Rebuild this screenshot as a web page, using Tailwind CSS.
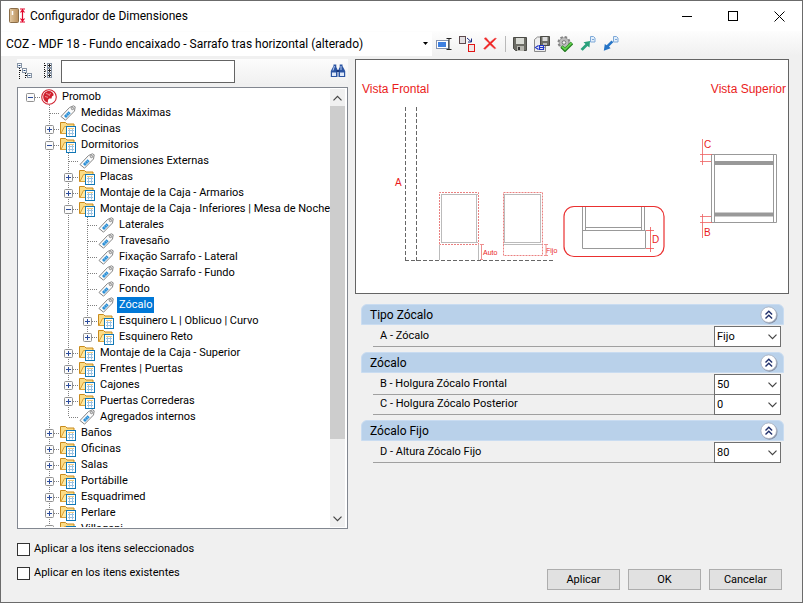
<!DOCTYPE html>
<html lang="es">
<head>
<meta charset="utf-8">
<meta name="viewport" content="width=device-width, initial-scale=1">
<title>Configurador de Dimensiones</title>
<script src="https://cdn.jsdelivr.net/npm/@tailwindcss/browser@4"></script>
</head>
<body class="h-screen overflow-hidden bg-[#f0f0f0] font-[Roboto,sans-serif] text-[11px] leading-4 text-black">
<svg class="hidden" aria-hidden="true">
  <symbol id="folder" viewBox="0 0 16 16">
    <path d="M.5 12.500V1.500h5l1.500 1.500h7v9.500z" fill="#fbdc86" stroke="#c98a1c"/>
    <path d="M1 12.500L4.500 5.500h10l-2 7z" fill="#ffe9a3" stroke="#dba23a"/>
    <rect x="6.500" y="5.500" width="9" height="10" fill="#fff" stroke="#1177b5"/>
    <path d="M8 9.500h6M8 12.500h6M9.500 8v6.500M12.500 8v6.500" stroke="#9cc3e2" fill="none"/>
    <path d="M8 7.500h6" stroke="#f0c97c"/>
  </symbol>
  <symbol id="tag" viewBox="0 0 16 16">
    <path d="M1 11.500L9.500 2.500L13.500 .8L15.200 1.800L14.500 6L5.500 15.200z" fill="#fbfbfb" stroke="#858585"/>
    <circle cx="12.500" cy="3.500" r="1.200" fill="#ddd" stroke="#777" stroke-width=".8"/>
    <path d="M4 11l4.500-4.700 2.200 2L6 13z" fill="#2b8fd6"/>
    <path d="M5.700 9l2.300 2.500M7.300 7.500L9.500 9.700" stroke="#a9d3f1" stroke-width=".7"/>
  </symbol>
  <symbol id="brand" viewBox="0 0 16 16">
    <circle cx="8" cy="8" r="7.300" fill="#fff" stroke="#d0202e" stroke-width="1.100"/>
    <path d="M8 2C4.500 2 2.200 4.700 2.200 8c0 3 2 5.300 4.800 5.800C6.600 12 7 10.600 8.200 9.600l2.400-.2.300-1.900 1.800-1.200C12.600 3.800 10.500 2 8 2z" fill="#d0202e"/>
    <path d="M5 4.500l3 1M4 7.500l3 .8M9.500 4l-1.500 3" stroke="#f7c3c6" stroke-width=".7"/>
  </symbol>
  <symbol id="plus" viewBox="0 0 9 9"><rect x=".5" y=".5" width="8" height="8" rx="1" fill="#fbfbfb" stroke="#919191"/><path d="M2 4.500h5M4.500 2v5" stroke="#2c4c9c"/></symbol>
  <symbol id="minus" viewBox="0 0 9 9"><rect x=".5" y=".5" width="8" height="8" rx="1" fill="#fbfbfb" stroke="#919191"/><path d="M2 4.500h5" stroke="#2c4c9c"/></symbol>
  <symbol id="chevron" viewBox="0 0 9 6"><path d="M.5 .7l4 4 4-4" fill="none" stroke="#444" stroke-width="1.200"/></symbol>
  <symbol id="collapse" viewBox="0 0 18 18">
    <circle cx="9.500" cy="9.700" r="8" fill="#8792a8"/><circle cx="8.700" cy="8.700" r="7.800" fill="#fff" stroke="#a4adbd" stroke-width=".8"/>
    <path d="M5.500 8.500l3.300-3.300 3.300 3.300M5.500 12.500l3.300-3.300 3.300 3.300" fill="none" stroke="#1f2f6b" stroke-width="1.400"/>
  </symbol>
</svg>

<div class="flex h-full flex-col border border-[#6b6b6b]">
  <header class="flex h-[30px] shrink-0 items-center bg-white pl-2">
    <svg class="h-4 w-[17px]" viewBox="0 0 17 16" aria-hidden="true">
      <defs><linearGradient id="wood" x1="0" x2="1"><stop offset="0" stop-color="#e3c9a2"/><stop offset="1" stop-color="#b98f5b"/></linearGradient></defs>
      <rect x=".5" y=".5" width="9" height="14" rx="1" fill="url(#wood)" stroke="#8a6d48"/><path d="M3.500 3v4" stroke="#fff" stroke-width="1.500"/>
      <path d="M11 1h5M11 14h5M13.500 2v11M11.500 4.500l2-2.500 2 2.500M11.500 10.500l2 2.500 2-2.500" fill="none" stroke="#e2062c" stroke-width="1.200"/>
    </svg>
    <h1 class="ml-1 flex-1 text-[12px]">Configurador de Dimensiones</h1>
    <button class="flex h-full w-[46px] items-center justify-center" aria-label="Minimizar"><svg class="h-[11px] w-[11px]" viewBox="0 0 11 11"><path d="M0 5.500h10" stroke="#000"/></svg></button>
    <button class="flex h-full w-[46px] items-center justify-center" aria-label="Maximizar"><svg class="h-[11px] w-[11px]" viewBox="0 0 11 11"><rect x=".5" y=".5" width="9" height="9" fill="none" stroke="#000"/></svg></button>
    <button class="flex h-full w-[46px] items-center justify-center" aria-label="Cerrar"><svg class="h-[11px] w-[11px]" viewBox="0 0 11 11"><path d="M.5 .5l10 10M10.500 .5l-10 10" stroke="#000"/></svg></button>
  </header>

  <div class="flex h-[25px] shrink-0 items-center bg-linear-to-b from-[#fdfdfd] to-[#f0f0f0]" role="toolbar" aria-label="Configuraciones">
    <div class="relative flex h-6 w-[431px] items-center bg-white">
      <select class="h-6 w-full appearance-none bg-white pl-[5px] text-[12px]" aria-label="Configuración">
        <option>COZ - MDF 18 - Fundo encaixado - Sarrafo tras horizontal (alterado)</option>
      </select>
      <svg class="pointer-events-none absolute right-1 h-[3px] w-[5px]" viewBox="0 0 5 3"><path d="M0 0h5L2.500 3z"/></svg>
    </div>
    <button class="ml-1 h-4 w-4" aria-label="Renombrar"><svg class="h-4 w-4" viewBox="0 0 16 16"><rect x=".5" y="4.500" width="12" height="8" fill="#fff" stroke="#8593ae"/><rect x="2" y="6" width="8" height="5" fill="#3d7fe0"/><path d="M10.500 2.500h5M10.500 13.500h5M13 3v10" stroke="#222"/></svg></button>
    <button class="ml-[7px] h-4 w-4" aria-label="Reemplazar"><svg class="h-4 w-4" viewBox="0 0 16 16"><rect x=".5" y=".5" width="6" height="7" fill="#e2dfe2" stroke="#5e4a4e"/><rect x="9.500" y="8.500" width="6" height="7" fill="#f1e6e6" stroke="#e01515"/><path d="M8 2l4 3.500M12.500 2.500v3.500h-3.500" fill="none" stroke="#1b2c83"/></svg></button>
    <button class="ml-[7px] h-4 w-4" aria-label="Eliminar"><svg class="h-4 w-4" viewBox="0 0 16 16"><path d="M2 2.500l5 4.700L1.500 12.500l1.500 1L8 8.800l4.500 4 1.500-.5L9.500 7.500l5-5-1.500-.5L8 6.300 4 1.500z" fill="#ee2020" stroke="#f36b6b" stroke-width=".5"/></svg></button>
    <span class="ml-[7px] h-4 w-px bg-[#b9b9b9]"></span>
    <button class="ml-1.5 h-4 w-4" aria-label="Guardar"><svg class="h-4 w-4" viewBox="0 0 16 16"><path d="M1.500 1.500h13v13h-11l-2-2z" fill="#6c6c65" stroke="#4b4b46"/><path d="M4 2h8v6H4z" fill="#d9dbd5"/><path d="M5 10h7v5H5z" fill="#b5b5ae"/><path d="M6 11h2v3H6z" fill="#333"/></svg></button>
    <button class="ml-1.5 h-4 w-4" aria-label="Guardar como"><svg class="h-4 w-4" viewBox="0 0 16 16"><path d="M.5 15.500V3.500l3-2.500h8v14.500z" fill="#eee" stroke="#8a8a8a"/><path d="M6.500 .5h9v9h-9z" fill="#6c6c65" stroke="#4b4b46"/><path d="M8.500 1h5v4h-5z" fill="#ddd"/><path d="M9 7h4v2H9z" fill="#bbb"/><path d="M4.500 9.500l-3 2 3 2M5.500 9.500h4v4h-4zM5.500 11.500h5" fill="none" stroke="#2136c9" stroke-width="1.200"/></svg></button>
    <button class="ml-[7px] h-4 w-4" aria-label="Validar"><svg class="h-4 w-4" viewBox="0 0 16 16"><circle cx="7" cy="6.500" r="5.300" fill="#9a9a9a" stroke="#858585" stroke-width="2.400" stroke-dasharray="2.400 1.760"/><circle cx="7" cy="6.500" r="4.500" fill="#bdbdbd"/><circle cx="7" cy="6.500" r="1.800" fill="#f6f6f6" stroke="#777"/><path d="M4.500 10.500L8 14l7-7" fill="none" stroke="#237c20" stroke-width="3.400"/><path d="M5 10.500L8 13.300 14.500 7" fill="none" stroke="#62cf4c" stroke-width="1.800"/></svg></button>
    <button class="ml-[7px] h-4 w-4" aria-label="Exportar"><svg class="h-4 w-4" viewBox="0 0 16 16"><path d="M.5 13l5-5-2-1.800L10 5l-.5 6.500L7.500 10l-4.800 4.800z" fill="#2aa17c"/><path d="M10.500 .5h3l1.500 1.500v4h-4.500z" fill="#e3effb" stroke="#7ea9d8"/><path d="M12 3.500h2" stroke="#7ea9d8"/></svg></button>
    <button class="ml-[7px] h-4 w-4" aria-label="Importar"><svg class="h-4 w-4" viewBox="0 0 16 16"><path d="M8.500 4.500l1.800 1.800L6 10.500l1.600 1.700L.8 14.800 1.800 8l1.900 1.200z" fill="#2674c6"/><path d="M10.500 .5h3l1.500 1.500v4h-4.500z" fill="#e3effb" stroke="#7ea9d8"/><path d="M12 3.500h2" stroke="#7ea9d8"/></svg></button>
  </div>

  <main class="flex min-h-0 flex-1 gap-[7px] pt-[3px] pr-[13px] pl-4">
    <section class="flex w-[331px] shrink-0 flex-col" aria-label="Navegación">
      <div class="flex h-6 shrink-0 items-center bg-linear-to-b from-[#fcfcfc] to-[#f1f1f1]">
        <button class="h-4 w-4" aria-label="Contraer todo"><svg class="h-4 w-4" viewBox="0 0 16 16"><path d="M2.500 5v11M3 7.500h3M8.500 10v6M9 12.500h2" stroke="#111" stroke-dasharray="1 1" fill="none"/><g fill="#fff" stroke="#8794a5"><rect x=".5" y=".5" width="4" height="4"/><rect x="5.500" y="5.500" width="4" height="4"/><rect x="10.500" y="10.500" width="4" height="4"/></g><path d="M1.500 2.500h2M6.500 7.500h2M11.500 12.500h2" stroke="#234b7f"/></svg></button>
        <button class="ml-2 h-4 w-4" aria-label="Expandir todo"><svg class="h-4 w-4" viewBox="0 0 16 16"><path d="M3.500 0v16M4 2.500h3M4 8h3M4 13.500h3" stroke="#111" stroke-dasharray="1 1" fill="none"/><g fill="#fff" stroke="#8794a5"><rect x="6.500" y=".5" width="4" height="4"/><rect x="6.500" y="5.500" width="4" height="4"/><rect x="6.500" y="10.500" width="4" height="4"/></g><path d="M7 2.500h3M8.500 1v3M7 7.500h3M8.500 6v3M7 12.500h3M8.500 11v3" stroke="#222"/></svg></button>
        <input class="ml-1 h-[23px] w-[174px] border border-[#646464] bg-white px-1" type="text" aria-label="Buscar">
        <button class="mr-0.5 ml-auto h-4 w-4" aria-label="Buscar siguiente"><svg class="h-4 w-4" viewBox="0 0 16 16"><path d="M.8 14V8L3.500 3V1.500h2.800V4l1.200 2.500V14zM8.500 14V6.500L9.700 4V1.500h2.800V3l2.700 5v6z" fill="#2b54a2"/><path d="M2 9.500h4V13H2zM10 9.500h4V13h-4z" fill="#dfe9fa"/><path d="M4.500 3L3 7.500M11 3v4" stroke="#b5c9ee"/><path d="M6.500 7h3v2h-3z" fill="#17377c"/></svg></button>
      </div>
      <div class="mt-1 flex min-h-0 flex-1 border border-[#828790] bg-white p-px">
        <ul id="tree" class="min-w-0 flex-1 overflow-hidden pl-0.5" role="tree"></ul>
        <div class="mr-px flex w-[15px] flex-col bg-[#f0f0f0]" aria-hidden="true">
          <div class="flex h-[17px] items-center justify-center"><svg class="h-1.5 w-[9px] rotate-180"><use href="#chevron"/></svg></div>
          <div class="h-[76%] bg-[#cdcdcd]"></div>
          <div class="mt-auto flex h-[17px] items-center justify-center"><svg class="h-1.5 w-[9px]"><use href="#chevron"/></svg></div>
        </div>
      </div>
      <div class="mt-3 mb-[21px] flex flex-col gap-2">
        <label class="flex items-center gap-1"><input class="h-[13px] w-[13px] appearance-none border border-[#333] bg-white checked:bg-[#333]" type="checkbox">Aplicar a los itens seleccionados</label>
        <label class="flex items-center gap-1"><input class="h-[13px] w-[13px] appearance-none border border-[#333] bg-white checked:bg-[#333]" type="checkbox">Aplicar en los itens existentes</label>
      </div>
    </section>

    <section class="flex min-w-0 flex-1 flex-col" aria-label="Propiedades">
      <figure class="border border-[#646464] bg-white">
        <svg class="block w-full" viewBox="0 0 432 233" fill="none" font-family="Liberation Sans, sans-serif" role="img" aria-label="Vistas del zócalo">
          <g fill="#ea1c1c">
            <text x="6" y="33" font-size="12">Vista Frontal</text>
            <text x="430" y="33" font-size="12" text-anchor="end">Vista Superior</text>
            <text x="39" y="126" font-size="10">A</text><text x="348" y="88" font-size="10">C</text><text x="348" y="176" font-size="10">B</text><text x="296" y="183" font-size="10">D</text>
            <text x="127" y="195" font-size="7">Auto</text><text x="190" y="193" font-size="7">Fijo</text>
          </g>
          <path d="M49.500 47v154M60.500 47v154" stroke="#666" stroke-dasharray="4 2"/>
          <path d="M49 200.500h149" stroke="#666" stroke-dasharray="4 2"/>
          <g stroke="#bbb">
            <path d="M83.500 185v15M122.500 185v15M85 134.500h37M85 182.500h37M85.500 134v49M120.500 134v49"/>
            <path d="M148 134.500h37M148 182.500h37M148.500 134v49M184.500 134v49M147 184.500h39"/>
          </g>
          <g stroke="#ea8080" stroke-dasharray="2 1"><path d="M83.500 184V132.500h39V184.500h-39M147.500 132.500h39v63h-39z"/></g>
          <path d="M124 184.500h4M125.500 185v15M124 199.500h3M188 184.500h4M190 185v10M188 195.500h4" stroke="#ee9090"/>
          <path d="M226.500 147v23.500h63V188.500h-63V170M229.500 147v23M285.500 147v23M288.500 147v24M229 167.500h57" stroke="#999"/>
          <rect x="208" y="146.500" width="100" height="50" rx="10" stroke="#ea3030" stroke-width="1.200"/>
          <path d="M290 170.500h8M290 188.500h8M294.500 167v25" stroke="#ee5050" stroke-width=".8"/>
          <path d="M355.500 94.500h65v68h-65zM358.500 95v67M417.500 95v67" stroke="#999"/>
          <path d="M359 103h58M359 154.500h58" stroke="#999" stroke-width="4"/>
          <path d="M346.500 79v26M344 94.500h12M344 101.500h11M346.500 154v24M344 156.500h11M344 162.500h12" stroke="#ee6060" stroke-width=".8"/>
        </svg>
      </figure>

      <div class="mt-[10px] mr-[5px] ml-1.5 flex flex-col gap-[5px]" id="groups"></div>

      <div class="mt-auto mr-[7px] mb-3 flex justify-end gap-2">
        <button class="h-[21px] w-[73px] border border-[#adadad] bg-[#e1e1e1]">Aplicar</button>
        <button class="h-[21px] w-[73px] border border-[#adadad] bg-[#e1e1e1]">OK</button>
        <button class="h-[21px] w-[73px] border border-[#adadad] bg-[#e1e1e1]">Cancelar</button>
      </div>
    </section>
  </main>
</div>

<script>
// [depth, kind, label]; kind: r = root, f = closed folder, o = open folder, t = tag, s = selected tag
const rows = [
  [0,'r','Promob'],[1,'t','Medidas Máximas'],[1,'f','Cocinas'],[1,'o','Dormitorios'],
  [2,'t','Dimensiones Externas'],[2,'f','Placas'],[2,'f','Montaje de la Caja - Armarios'],
  [2,'o','Montaje de la Caja - Inferiores | Mesa de Noche'],
  [3,'t','Laterales'],[3,'t','Travesaño'],[3,'t','Fixação Sarrafo - Lateral'],[3,'t','Fixação Sarrafo - Fundo'],
  [3,'t','Fondo'],[3,'s','Zócalo'],[3,'f','Esquinero L | Oblicuo | Curvo'],[3,'f','Esquinero Reto'],
  [2,'f','Montaje de la Caja - Superior'],[2,'f','Frentes | Puertas'],[2,'f','Cajones'],[2,'f','Puertas Correderas'],
  [2,'t','Agregados internos'],[1,'f','Baños'],[1,'f','Oficinas'],[1,'f','Salas'],[1,'f','Portábille'],
  [1,'f','Esquadrimed'],[1,'f','Perlare'],[1,'f','Villagani']
];
// True when another row at the given depth follows before its parent closes
function continues(i, depth) {
  for (let j = i + 1; j < rows.length; j++) {
    if (rows[j][0] < depth) return false;
    if (rows[j][0] === depth) return true;
  }
  return false;
}
const line = d => `<path d="${d}" stroke="#808080" stroke-dasharray="1 1"/>`;
document.getElementById('tree').innerHTML = rows.map(([depth, kind, label], i) => {
  let cells = '';
  for (let k = 0; k <= depth; k++) {
    const more = continues(i, k);
    let d = '';
    if (k < depth) { if (more) d = line('M9.5 0v16'); }
    else d = (depth ? line(more ? 'M9.5 0v16' : 'M9.5 0v8') : '') + line('M10 8.5h9');
    const box = k === depth && 'rfo'.includes(kind)
      ? `<button class="absolute top-1 left-[5px] h-[9px] w-[9px]" aria-label="${kind === 'f' ? 'Expandir' : 'Contraer'} ${label}"><svg class="block h-[9px] w-[9px]"><use href="#${kind === 'f' ? 'plus' : 'minus'}"/></svg></button>` : '';
    cells += `<span class="relative h-4 w-[19px] shrink-0"><svg class="block h-4 w-[19px]" viewBox="0 0 19 16">${d}</svg>${box}</span>`;
  }
  const icon = kind === 'r' ? 'brand' : 'ts'.includes(kind) ? 'tag' : 'folder';
  const text = kind === 's' ? 'bg-[#0078d7] px-0.5 text-white' : 'px-0.5';
  return `<li class="flex h-4 items-center whitespace-nowrap" role="treeitem" aria-level="${depth + 1}" aria-selected="${kind === 's'}">${cells}<svg class="mr-[3px] ml-px h-4 w-4 shrink-0"><use href="#${icon}"/></svg><span class="${text}">${label}</span></li>`;
}).join('');

const groups = [
  ['Tipo Zócalo', [['A - Zócalo', 'Fijo']]],
  ['Zócalo', [['B - Holgura Zócalo Frontal', '50'], ['C - Holgura Zócalo Posterior', '0']]],
  ['Zócalo Fijo', [['D - Altura Zócalo Fijo', '80']]]
];
let id = 0;
document.getElementById('groups').innerHTML = groups.map(([title, fields]) => `
  <section>
    <h2 class="flex h-[21px] items-center rounded-t-md border border-[#c9dcf1] bg-[#b9d1ea] pr-[5px] pl-2 text-[12px]">
      <span class="flex-1">${title}</span>
      <button class="h-[18px] w-[18px]" aria-label="Contraer ${title}"><svg class="h-[18px] w-[18px]"><use href="#collapse"/></svg></button>
    </h2>
    <div class="mt-px mr-[3px] ml-3">${fields.map(([label, value], i) => {
      const key = 'field' + id++;
      return `<div class="${i ? '-mt-px' : ''} flex h-[21px]">
        <label class="flex flex-1 items-center border-b border-[#a0a0a0] pl-[7px]" for="${key}">${label}</label>
        <span class="relative"><select class="block h-[21px] w-[67px] appearance-none border border-[#707070] bg-white pl-0.5" id="${key}"><option>${value}</option></select>
        <svg class="pointer-events-none absolute top-2 right-1 h-1.5 w-[9px]"><use href="#chevron"/></svg></span>
      </div>`;
    }).join('')}</div>
  </section>`).join('');
</script>
</body>
</html>
